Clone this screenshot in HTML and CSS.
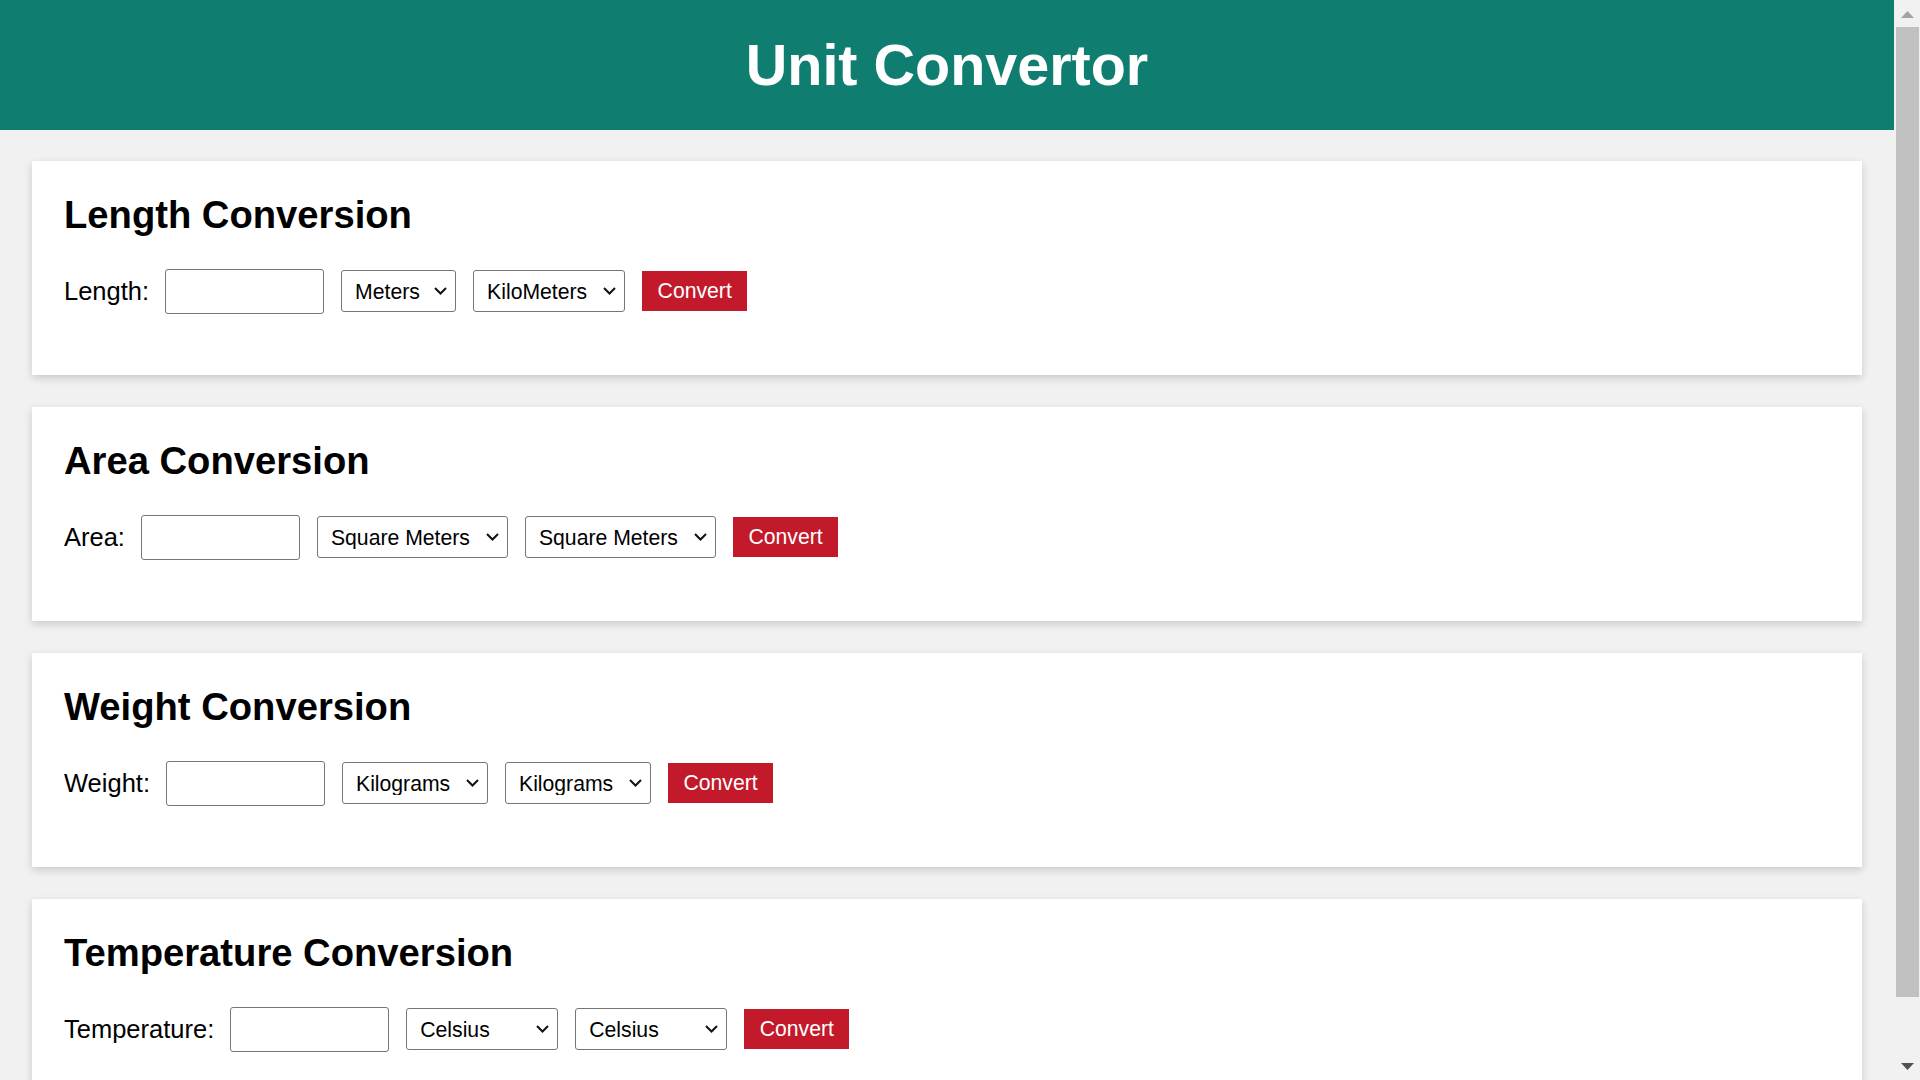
FILE: index.html
```html
<!DOCTYPE html>
<html lang="en">
<head>
<meta charset="utf-8">
<title>Unit Convertor</title>
<link rel="stylesheet" href="styles.css">
</head>
<body>
<div class="page">
  <header class="topbar">
    <h1>Unit Convertor</h1>
  </header>
  <main class="container">
    <section class="card">
      <h2>Length Conversion</h2>
      <div class="row">
        <label class="lbl">Length:</label>
        <input type="text" class="num">
        <span class="selwrap"><select class="sel w115"><option>Meters</option><option>KiloMeters</option></select><svg class="chev" viewBox="0 0 13 8" width="13" height="8"><path d="M1 1l5.5 5.5L12 1" fill="none" stroke="#111" stroke-width="2"/></svg></span>
        <span class="selwrap"><select class="sel w152"><option>KiloMeters</option><option>Meters</option></select><svg class="chev" viewBox="0 0 13 8" width="13" height="8"><path d="M1 1l5.5 5.5L12 1" fill="none" stroke="#111" stroke-width="2"/></svg></span>
        <button class="btn">Convert</button>
      </div>
    </section>
    <section class="card">
      <h2>Area Conversion</h2>
      <div class="row">
        <label class="lbl">Area:</label>
        <input type="text" class="num">
        <span class="selwrap"><select class="sel w191"><option>Square Meters</option></select><svg class="chev" viewBox="0 0 13 8" width="13" height="8"><path d="M1 1l5.5 5.5L12 1" fill="none" stroke="#111" stroke-width="2"/></svg></span>
        <span class="selwrap"><select class="sel w191"><option>Square Meters</option></select><svg class="chev" viewBox="0 0 13 8" width="13" height="8"><path d="M1 1l5.5 5.5L12 1" fill="none" stroke="#111" stroke-width="2"/></svg></span>
        <button class="btn">Convert</button>
      </div>
    </section>
    <section class="card">
      <h2>Weight Conversion</h2>
      <div class="row">
        <label class="lbl">Weight:</label>
        <input type="text" class="num">
        <span class="selwrap"><select class="sel w146"><option>Kilograms</option></select><svg class="chev" viewBox="0 0 13 8" width="13" height="8"><path d="M1 1l5.5 5.5L12 1" fill="none" stroke="#111" stroke-width="2"/></svg></span>
        <span class="selwrap"><select class="sel w146"><option>Kilograms</option></select><svg class="chev" viewBox="0 0 13 8" width="13" height="8"><path d="M1 1l5.5 5.5L12 1" fill="none" stroke="#111" stroke-width="2"/></svg></span>
        <button class="btn">Convert</button>
      </div>
    </section>
    <section class="card">
      <h2>Temperature Conversion</h2>
      <div class="row">
        <label class="lbl">Temperature:</label>
        <input type="text" class="num">
        <span class="selwrap"><select class="sel w152"><option>Celsius</option></select><svg class="chev" viewBox="0 0 13 8" width="13" height="8"><path d="M1 1l5.5 5.5L12 1" fill="none" stroke="#111" stroke-width="2"/></svg></span>
        <span class="selwrap"><select class="sel w152"><option>Celsius</option></select><svg class="chev" viewBox="0 0 13 8" width="13" height="8"><path d="M1 1l5.5 5.5L12 1" fill="none" stroke="#111" stroke-width="2"/></svg></span>
        <button class="btn">Convert</button>
      </div>
    </section>
  </main>
</div>
<div class="scrollbar">
  <div class="sb-btn"><svg viewBox="0 0 13 7" width="13" height="7"><path d="M6.5 0L13 7H0z" fill="#a3a3a3"/></svg></div>
  <div class="sb-track"><div class="sb-thumb"></div></div>
  <div class="sb-btn sb-down"><svg viewBox="0 0 13 7" width="13" height="7"><path d="M0 0h13L6.5 7z" fill="#505050"/></svg></div>
</div>
</body>
</html>
```
FILE: styles.css
```css
html, body {
  margin: 0;
  padding: 0;
  height: 100%;
  overflow: hidden;
}

body {
  display: flex;
  font-family: "Liberation Sans", Arial, sans-serif;
  color: #000;
  background: #f1f1f1;
}

.page {
  flex: 1;
  min-width: 0;
  height: 100%;
  overflow: hidden;
  background: #f1f1f1;
}

.topbar {
  background: #0f7e71;
  padding: 32px 0 32px;
  text-align: center;
}

.topbar h1 {
  margin: 0;
  color: #fff;
  font-size: 57.5px;
  line-height: 66px;
  font-weight: bold;
}

.container {
  padding: 31px 32px;
  display: flex;
  flex-direction: column;
  gap: 32px;
}

.card {
  background: #fff;
  padding: 32px 31px 61.5px 32px;
  box-shadow: 0 3px 8px rgba(0, 0, 0, 0.17);
}

.card h2 {
  margin: 0 0 32.5px;
  font-size: 38.2px;
  line-height: 43px;
  font-weight: bold;
}

.row {
  display: flex;
  align-items: center;
  gap: 17px;
  height: 45px;
}

.lbl {
  font-size: 25.5px;
  line-height: 29px;
  margin-right: -1px;
}

.num {
  box-sizing: border-box;
  width: 159px;
  height: 45px;
  border: 1px solid #767676;
  border-radius: 3px;
  background: #fff;
  padding: 0 6px;
  font-size: 20.8px;
  font-family: "Liberation Sans", Arial, sans-serif;
}

.selwrap {
  position: relative;
  display: flex;
}

.sel {
  -webkit-appearance: none;
  appearance: none;
  box-sizing: border-box;
  height: 42px;
  border: 1px solid #767676;
  border-radius: 3px;
  background: #fff;
  color: #000;
  padding: 0 30px 0 13px;
  font-size: 21.2px;
  font-family: "Liberation Sans", Arial, sans-serif;
}

.chev {
  position: absolute;
  right: 9px;
  top: 17px;
  pointer-events: none;
}

.w115 { width: 115px; }
.w146 { width: 146px; }
.w152 { width: 152px; }
.w191 { width: 191px; }

.btn {
  box-sizing: border-box;
  height: 40px;
  padding: 0 15.5px;
  border: none;
  border-radius: 0;
  background: #c21a2b;
  color: #fff;
  font-size: 21.2px;
  font-family: "Liberation Sans", Arial, sans-serif;
}

.scrollbar {
  width: 26px;
  flex: none;
  height: 100%;
  background: #f1f1f1;
  display: flex;
  flex-direction: column;
}

.sb-btn {
  height: 26px;
  flex: none;
  display: flex;
  justify-content: center;
  align-items: flex-start;
  padding-top: 11px;
  box-sizing: border-box;
  padding-left: 1px;
}

.sb-down {
  padding-top: 9px;
}

.sb-track {
  flex: 1;
  padding: 1px 1px 0 2px;
}

.sb-thumb {
  height: 970px;
  background: #c1c1c1;
}
```
